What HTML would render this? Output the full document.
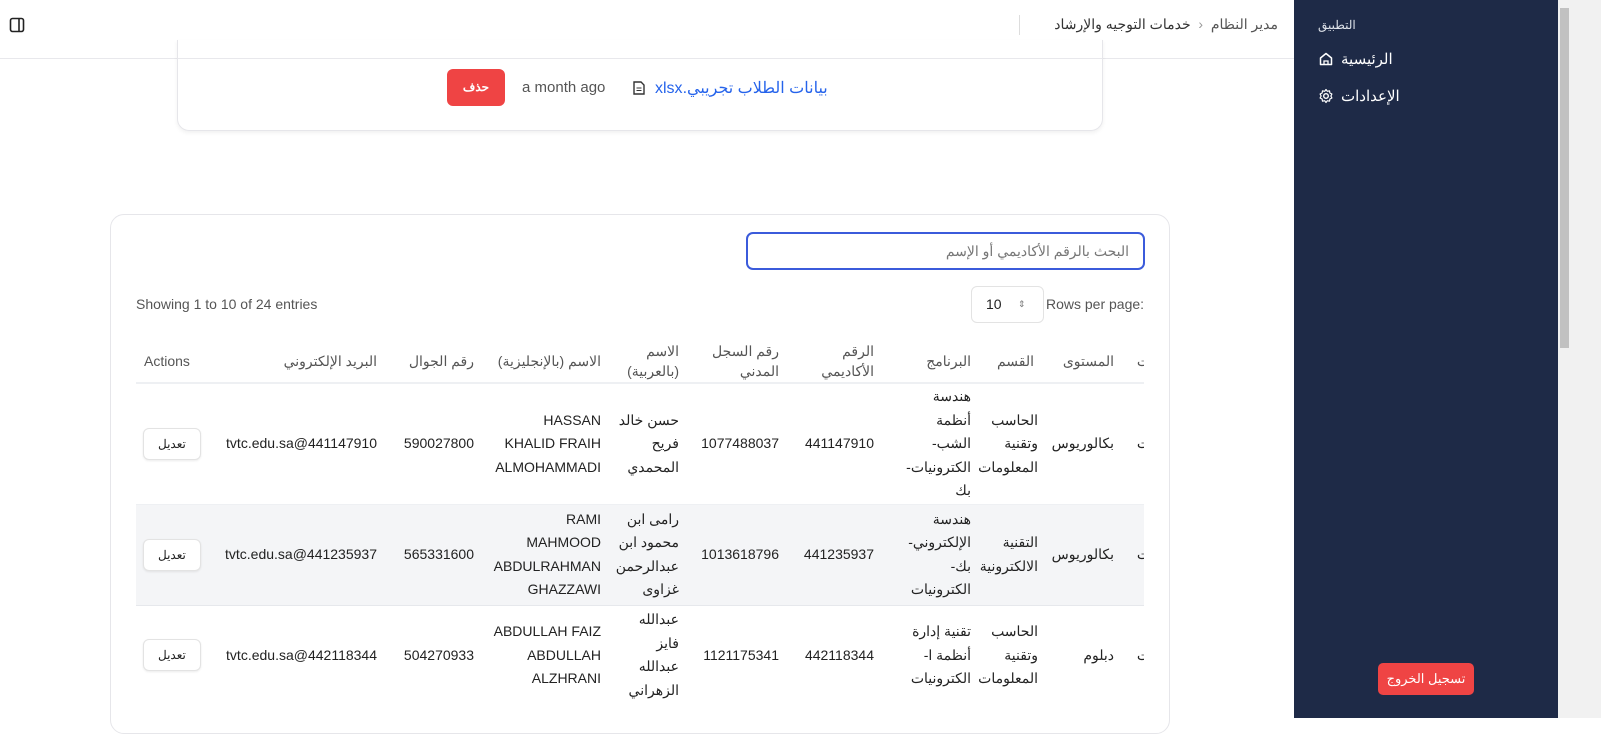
<!DOCTYPE html>
<html><head><meta charset="utf-8"><style>
*{box-sizing:border-box;margin:0;padding:0}
body{width:1601px;height:718px;overflow:hidden;background:#fff;font-family:"Liberation Sans","Noto Sans CJK SC",sans-serif;color:#222;position:relative;font-size:14px}
.abs{position:absolute}
.side{left:1294px;top:0;width:264px;height:718px;background:#1e2a47;color:#fff}
.scroll{left:1558px;top:0;width:43px;height:718px;background:#f1f1f1}
.thumb{left:1560px;top:8px;width:9px;height:340px;background:#c1c1c1}
table{border-collapse:collapse;table-layout:fixed;direction:rtl;width:1030px}
td,th{text-align:right;padding:0 8px;line-height:23.5px;font-size:14px;color:#222;font-weight:normal;vertical-align:middle;white-space:nowrap}
th{color:#555;line-height:20px}
td.n{padding-right:4px;letter-spacing:-0.3px}
.btn{display:inline-block;border:1px solid #e3e3e3;border-radius:6px;padding:0 14px;line-height:30px;font-size:12px;background:#fff;box-shadow:0 1px 2px rgba(0,0,0,.08)}
</style></head><body>
<div class="abs" style="left:0;top:58px;width:1294px;height:1px;background:#e8e8ec"></div>
<svg class="abs" style="left:9px;top:17px" width="16" height="16" viewBox="0 0 16 16"><rect x="1.5" y="1.5" width="13" height="13" rx="2" fill="none" stroke="#222" stroke-width="1.6"/><line x1="10" y1="2" x2="10" y2="14" stroke="#222" stroke-width="1.6"/></svg>
<div class="abs" style="left:1019px;top:15px;width:1px;height:20px;background:#ddd"></div>
<div class="abs" style="left:1034px;top:16px;font-size:14px;color:#555;direction:rtl;width:244px;text-align:right">مدير النظام &nbsp;<span style="color:#999">&lsaquo;</span>&nbsp; <span style="color:#333">خدمات التوجيه والإرشاد</span></div>

<div class="abs" style="left:177px;top:40px;width:926px;height:91px;border:1px solid #e6e6ea;border-top:none;border-radius:0 0 12px 12px;box-shadow:0 2px 4px rgba(0,0,0,.06)"></div>
<div class="abs" style="left:447px;top:69px;width:58px;height:37px;background:#ef4444;border-radius:6px;color:#fff;font-size:12px;text-align:center;line-height:37px;font-weight:bold">حذف</div>
<div class="abs" style="left:522px;top:79px;font-size:15px;color:#555">a month ago</div>
<svg class="abs" style="left:633px;top:81px" width="12" height="14" viewBox="0 0 12 14"><path d="M1 1h7l3 3v9H1z" fill="none" stroke="#333" stroke-width="1.4"/><path d="M3.5 7h5M3.5 9.5h5" stroke="#333"/></svg>
<div class="abs" style="left:655px;top:78px;font-size:16px;color:#2563eb;direction:rtl;width:180px;text-align:left">بيانات الطلاب تجريبي.xlsx</div>

<div class="abs" style="left:110px;top:214px;width:1060px;height:520px;border:1px solid #e6e6ea;border-radius:14px"></div>
<div class="abs" style="left:746px;top:232px;width:399px;height:38px;border:2px solid #3b5bdb;border-radius:7px;direction:rtl;padding-right:14px;line-height:34px;font-size:14px;color:#777">البحث بالرقم الأكاديمي أو الإسم</div>
<div class="abs" style="left:136px;top:296px;font-size:14px;color:#555">Showing 1 to 10 of 24 entries</div>
<div class="abs" style="left:1046px;top:296px;font-size:14px;color:#555">Rows per page:</div>
<div class="abs" style="left:971px;top:286px;width:73px;height:37px;border:1px solid #e3e3e3;border-radius:6px;padding-left:14px;line-height:35px;font-size:14px">10<span style="position:absolute;left:46px;top:0;font-size:9px;color:#777;line-height:35px">⇕</span></div>

<div class="abs" style="left:136px;top:340px;width:1008px;height:378px;overflow:hidden">
<table style="position:absolute;right:-14px;top:0">
<colgroup><col style="width:36px"><col style="width:80px"><col style="width:63px"><col style="width:97px"><col style="width:95px"><col style="width:100px"><col style="width:78px"><col style="width:127px"><col style="width:97px"><col style="width:176px"><col style="width:81px"></colgroup>
<tr style="height:43px;border-bottom:2px solid #eef0f3"><th>ت</th><th>المستوى</th><th>القسم</th><th>البرنامج</th><th>الرقم<br>الأكاديمي</th><th>رقم السجل<br>المدني</th><th>الاسم<br>(بالعربية)</th><th>الاسم (بالإنجليزية)</th><th>رقم الجوال</th><th>البريد الإلكتروني</th><th style="text-align:left;padding-left:16px">Actions</th></tr>
<tr style="height:121px"><td>ت</td><td>بكالوريوس</td><td class="n">الحاسب<br>وتقنية<br>المعلومات</td><td>هندسة<br>أنظمة<br>الشب-<br>الكترونيات-<br>بك</td><td>441147910</td><td>1077488037</td><td>حسن خالد<br>فريح<br>المحمدي</td><td>HASSAN<br>KHALID FRAIH<br>ALMOHAMMADI</td><td>590027800</td><td>tvtc.edu.sa@441147910</td><td style="text-align:left;padding-left:15px"><span class="btn">تعديل</span></td></tr>
<tr style="height:101px;background:#f4f5f7;border-top:1px solid #eef0f3;border-bottom:1px solid #e6e8ec"><td>ت</td><td>بكالوريوس</td><td class="n">التقنية<br>الالكترونية</td><td>هندسة<br>الإلكتروني-<br>بك-<br>الكترونيات</td><td>441235937</td><td>1013618796</td><td>رامى ابن<br>محمود ابن<br>عبدالرحمن<br>غزاوى</td><td>RAMI<br>MAHMOOD<br>ABDULRAHMAN<br>GHAZZAWI</td><td>565331600</td><td>tvtc.edu.sa@441235937</td><td style="text-align:left;padding-left:15px"><span class="btn">تعديل</span></td></tr>
<tr style="height:100px"><td>ت</td><td>دبلوم</td><td class="n">الحاسب<br>وتقنية<br>المعلومات</td><td>تقنية إدارة<br>أنظمة ا-<br>الكترونيات</td><td>442118344</td><td>1121175341</td><td>عبدالله<br>فايز<br>عبدالله<br>الزهراني</td><td>ABDULLAH FAIZ<br>ABDULLAH<br>ALZHRANI</td><td>504270933</td><td>tvtc.edu.sa@442118344</td><td style="text-align:left;padding-left:15px"><span class="btn">تعديل</span></td></tr>
</table></div>

<div class="abs side"></div>
<div class="abs" style="left:1318px;top:18px;font-size:12px;color:#dfe3ea">التطبيق</div>
<svg class="abs" style="left:1318px;top:51px" width="16" height="16" viewBox="0 0 16 16"><path d="M2.5 7L8 2.5 13.5 7v6.5h-11z" fill="none" stroke="#fff" stroke-width="1.5" stroke-linejoin="round"/><path d="M6 13.5V10h4v3.5" fill="none" stroke="#fff" stroke-width="1.3"/></svg>
<div class="abs" style="left:1341px;top:50px;font-size:15px;color:#fff">الرئيسية</div>
<svg class="abs" style="left:1318px;top:88px" width="16" height="16" viewBox="0 0 16 16"><circle cx="8" cy="8" r="2.3" fill="none" stroke="#fff" stroke-width="1.4"/><path d="M8 1.5l1.3 1.8 2.2-.5.4 2.2 2 1-1 2 1 2-2 1-.4 2.2-2.2-.5L8 14.5l-1.3-1.8-2.2.5-.4-2.2-2-1 1-2-1-2 2-1 .4-2.2 2.2.5z" fill="none" stroke="#fff" stroke-width="1.2" stroke-linejoin="round"/></svg>
<div class="abs" style="left:1341px;top:87px;font-size:15px;color:#fff">الإعدادات</div>
<div class="abs" style="left:1378px;top:663px;width:96px;height:32px;background:#ef4444;border-radius:5px;color:#fff;font-size:13px;text-align:center;line-height:32px">تسجيل الخروج</div>
<div class="abs scroll"></div><div class="abs thumb"></div>
</body></html>
